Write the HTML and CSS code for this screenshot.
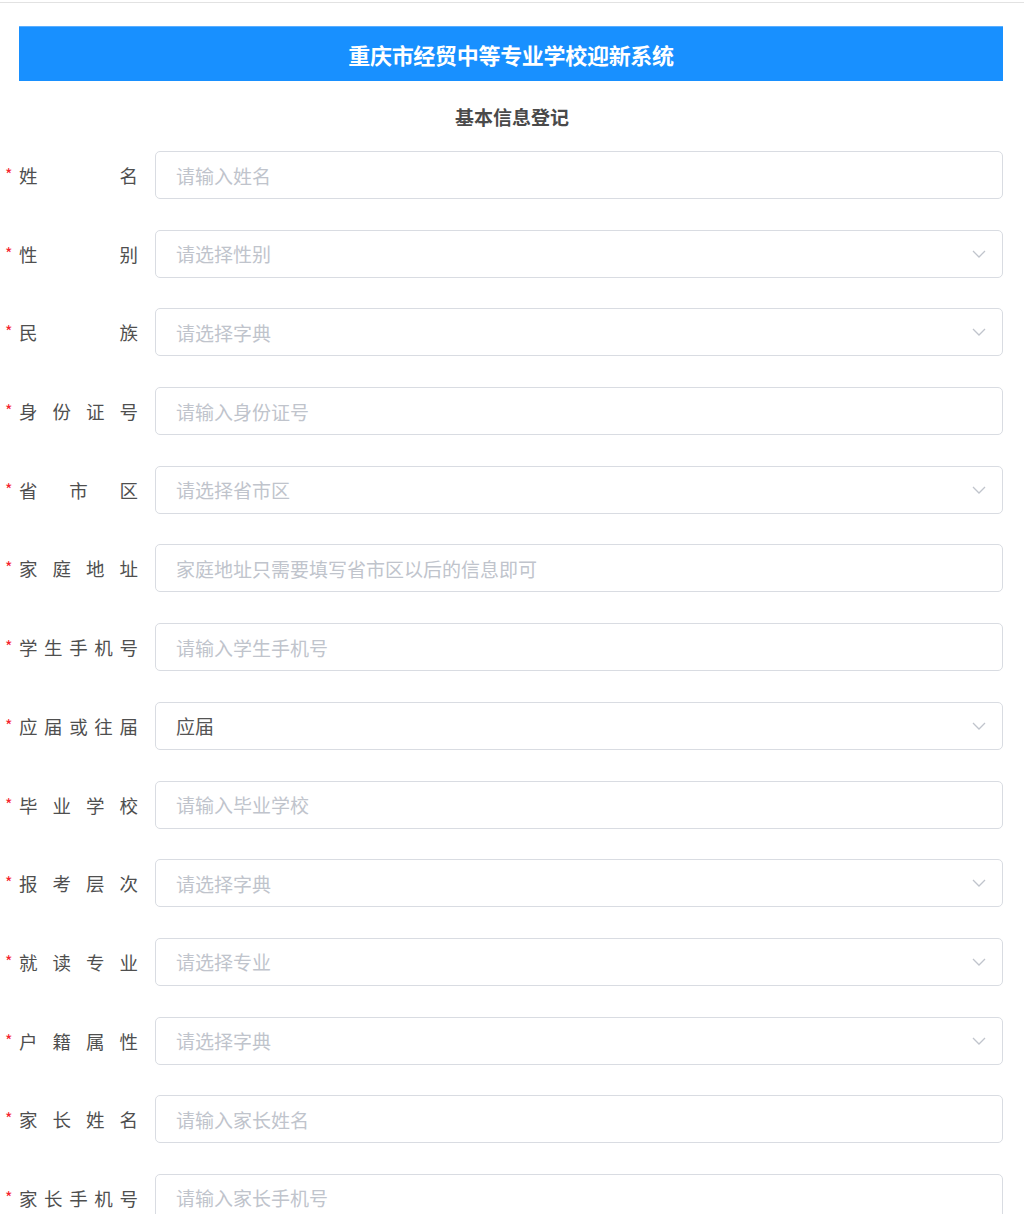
FILE: index.html
```html
<!DOCTYPE html>
<html lang="zh-CN">
<head>
    <meta charset="UTF-8">
    <title>重庆市经贸中等专业学校迎新系统</title>
    <link rel="stylesheet" href="styles.css">
</head>
<body>
    <div class="top-line"></div>
    <div class="header">重庆市经贸中等专业学校迎新系统</div>
    <h2 class="subtitle">基本信息登记</h2>
    <form class="reg-form">
        <div class="form-row">
            <label class="label"><span class="req">*</span><span class="label-text">姓名</span></label>
            <input class="field" type="text" placeholder="请输入姓名">
        </div>
        <div class="form-row">
            <label class="label"><span class="req">*</span><span class="label-text">性别</span></label>
            <div class="field select"><span class="ph">请选择性别</span><svg class="arrow" viewBox="0 0 14 8"><path d="M1 1l6 6 6-6"/></svg></div>
        </div>
        <div class="form-row">
            <label class="label"><span class="req">*</span><span class="label-text">民族</span></label>
            <div class="field select"><span class="ph">请选择字典</span><svg class="arrow" viewBox="0 0 14 8"><path d="M1 1l6 6 6-6"/></svg></div>
        </div>
        <div class="form-row">
            <label class="label"><span class="req">*</span><span class="label-text">身份证号</span></label>
            <input class="field" type="text" placeholder="请输入身份证号">
        </div>
        <div class="form-row">
            <label class="label"><span class="req">*</span><span class="label-text">省市区</span></label>
            <div class="field select"><span class="ph">请选择省市区</span><svg class="arrow" viewBox="0 0 14 8"><path d="M1 1l6 6 6-6"/></svg></div>
        </div>
        <div class="form-row">
            <label class="label"><span class="req">*</span><span class="label-text">家庭地址</span></label>
            <input class="field" type="text" placeholder="家庭地址只需要填写省市区以后的信息即可">
        </div>
        <div class="form-row">
            <label class="label"><span class="req">*</span><span class="label-text">学生手机号</span></label>
            <input class="field" type="text" placeholder="请输入学生手机号">
        </div>
        <div class="form-row">
            <label class="label"><span class="req">*</span><span class="label-text">应届或往届</span></label>
            <div class="field select"><span class="val">应届</span><svg class="arrow" viewBox="0 0 14 8"><path d="M1 1l6 6 6-6"/></svg></div>
        </div>
        <div class="form-row">
            <label class="label"><span class="req">*</span><span class="label-text">毕业学校</span></label>
            <input class="field" type="text" placeholder="请输入毕业学校">
        </div>
        <div class="form-row">
            <label class="label"><span class="req">*</span><span class="label-text">报考层次</span></label>
            <div class="field select"><span class="ph">请选择字典</span><svg class="arrow" viewBox="0 0 14 8"><path d="M1 1l6 6 6-6"/></svg></div>
        </div>
        <div class="form-row">
            <label class="label"><span class="req">*</span><span class="label-text">就读专业</span></label>
            <div class="field select"><span class="ph">请选择专业</span><svg class="arrow" viewBox="0 0 14 8"><path d="M1 1l6 6 6-6"/></svg></div>
        </div>
        <div class="form-row">
            <label class="label"><span class="req">*</span><span class="label-text">户籍属性</span></label>
            <div class="field select"><span class="ph">请选择字典</span><svg class="arrow" viewBox="0 0 14 8"><path d="M1 1l6 6 6-6"/></svg></div>
        </div>
        <div class="form-row">
            <label class="label"><span class="req">*</span><span class="label-text">家长姓名</span></label>
            <input class="field" type="text" placeholder="请输入家长姓名">
        </div>
        <div class="form-row">
            <label class="label"><span class="req">*</span><span class="label-text">家长手机号</span></label>
            <input class="field" type="text" placeholder="请输入家长手机号">
        </div>
    </form>
</body>
</html>
```

FILE: styles.css
```css
body { margin: 0; font-family: "Noto Sans CJK SC", "Noto Sans", sans-serif; background-color: #fff; color: #606266; }
.top-line { margin-top: 2px; height: 1px; background-color: #e2e2e2; }
.header { margin: 23px 21px 0 19px; height: 55px; display: flex; align-items: center; justify-content: center; background-color: #1890ff; border-top: 1px solid #5aaeff; box-sizing: border-box; color: #fff; font-size: 22px; font-weight: bold; letter-spacing: -0.3px; }
.subtitle { margin: 22px 0 0; text-align: center; font-size: 19px; line-height: 28px; font-weight: bold; color: #4a4a4a; }
.reg-form { margin-top: 20px; padding-right: 21px; }
.form-row { display: flex; align-items: center; height: 48px; margin-bottom: 30.7px; }
.label { width: 155px; flex-shrink: 0; box-sizing: border-box; padding: 0 17px 0 5px; display: flex; align-items: center; font-size: 18.5px; color: #4f4f4f; }
.req { width: 14px; color: #f5222d; font-size: 16px; line-height: 16px; padding-bottom: 2px; }
.label-text { flex: 1; text-align: justify; text-align-last: justify; line-height: 24px; }
.field { flex: 1; height: 48px; box-sizing: border-box; border: 1.5px solid #d9dce2; border-radius: 5px; padding: 0 16px 0 20px; font-family: inherit; font-size: 19px; color: #606266; outline: none; background: #fff; }
.field::placeholder { color: #c0c4cc; }
.select { display: flex; align-items: center; justify-content: space-between; }
.ph { color: #c0c4cc; }
.val { color: #555; }
.arrow { width: 14px; height: 8px; fill: none; stroke: #c0c4cc; stroke-width: 1.3; }
```
